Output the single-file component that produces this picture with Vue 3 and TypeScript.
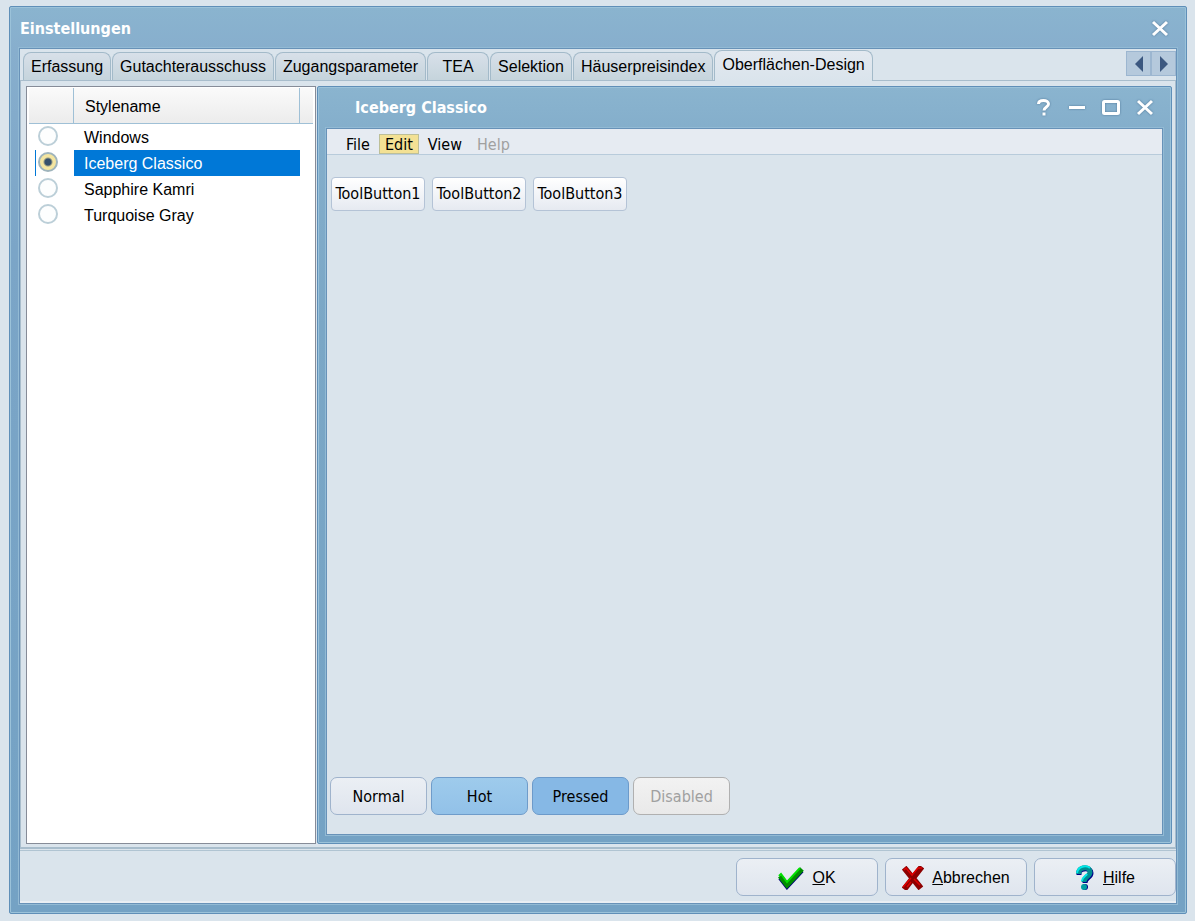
<script setup lang="ts">
import { ref } from 'vue'

const tabs = ['Erfassung', 'Gutachterausschuss', 'Zugangsparameter', 'TEA', 'Selektion', 'Häuserpreisindex', 'Oberflächen-Design']
const activeTab = ref('Oberflächen-Design')

const styles = ['Windows', 'Iceberg Classico', 'Sapphire Kamri', 'Turquoise Gray']
const selected = ref('Iceberg Classico')

const toolButtons = ['ToolButton1', 'ToolButton2', 'ToolButton3']
</script>

<template>
  <div class="desktop">
    <main class="window">
      <header class="caption">
        <h1>Einstellungen</h1>
        <button type="button" class="cap-btn" aria-label="Schließen">
          <svg width="18" height="18" viewBox="0 0 18 18"><path d="M2 2L16 15M16 2L2 15" /></svg>
        </button>
      </header>

      <div class="client">
        <div class="tab-strip">
          <div class="tabs" role="tablist">
            <button
              v-for="tab in tabs"
              :key="tab"
              type="button"
              role="tab"
              class="tab"
              :class="{ active: tab === activeTab }"
              :aria-selected="tab === activeTab"
              @click="activeTab = tab"
            >{{ tab }}</button>
          </div>
          <div class="scroller">
            <button type="button" aria-label="Zurück"><svg width="8" height="16" viewBox="0 0 8 16"><path d="M8 0V16L0 8Z" /></svg></button>
            <button type="button" aria-label="Weiter"><svg width="8" height="16" viewBox="0 0 8 16"><path d="M0 0V16L8 8Z" /></svg></button>
          </div>
        </div>

        <section class="page">
          <div class="list">
            <table>
              <colgroup><col class="c-radio" /><col class="c-name" /><col /></colgroup>
              <thead>
                <tr><th></th><th>Stylename</th><th></th></tr>
              </thead>
              <tbody>
                <tr v-for="(name, i) in styles" :key="name" :class="{ selected: name === selected }">
                  <td class="radio-cell">
                    <input :id="'style-' + i" v-model="selected" type="radio" name="style" :value="name" />
                  </td>
                  <td class="name-cell"><label :for="'style-' + i">{{ name }}</label></td>
                  <td></td>
                </tr>
              </tbody>
            </table>
          </div>

          <section class="preview">
            <header class="caption preview-caption">
              <h2>Iceberg Classico</h2>
              <div class="cap-btns">
                <button type="button" class="cap-btn" aria-label="Hilfe">
                  <svg width="18" height="18" viewBox="0 0 18 18"><path class="thin" d="M3.500 5C3.500 2.500 6 1.500 8.500 1.500C11.500 1.500 13.500 3 13.500 5C13.500 8 9 8 9 11.500M9 13.500V16.500" /></svg>
                </button>
                <button type="button" class="cap-btn" aria-label="Minimieren">
                  <svg width="18" height="18" viewBox="0 0 18 18"><path d="M1 8.500H17" /></svg>
                </button>
                <button type="button" class="cap-btn" aria-label="Maximieren">
                  <svg width="20" height="18" viewBox="0 0 20 18"><rect x="2.500" y="2.500" width="15" height="12" rx="1" /></svg>
                </button>
                <button type="button" class="cap-btn" aria-label="Schließen">
                  <svg width="18" height="18" viewBox="0 0 18 18"><path d="M2 2L16 15M16 2L2 15" /></svg>
                </button>
              </div>
            </header>
            <div class="preview-client">
              <nav class="menu">
                <button type="button">File</button>
                <button type="button" class="hot">Edit</button>
                <button type="button">View</button>
                <button type="button" disabled>Help</button>
              </nav>
              <div class="toolbar">
                <button v-for="label in toolButtons" :key="label" type="button">{{ label }}</button>
              </div>
              <div class="states">
                <button type="button" class="btn">Normal</button>
                <button type="button" class="btn hot">Hot</button>
                <button type="button" class="btn pressed">Pressed</button>
                <button type="button" class="btn" disabled>Disabled</button>
              </div>
            </div>
          </section>
        </section>

        <footer class="footer">
          <button type="button" class="btn">
            <svg width="26" height="24" viewBox="0 0 26 24">
              <path d="M2 10L9 19L24 3" transform="translate(0 2)" fill="none" stroke="#000078" stroke-width="4" />
              <path d="M2 10L9 19L24 3" fill="none" stroke="#008c00" stroke-width="5" />
              <path d="M1 10L3 8L9 16L22 2" fill="none" stroke="#00e000" stroke-width="2" />
            </svg>
            <span><u>O</u>K</span>
          </button>
          <button type="button" class="btn">
            <svg width="22" height="24" viewBox="0 0 22 24">
              <path d="M4 4L17 20M18 3L4 21" fill="none" stroke="#8c0000" stroke-width="6" stroke-linecap="square" stroke-linejoin="round" />
              <path d="M2 4L4 2L10 9L16 2H20M1 21L9 12M5 21L9 16M12 13L18 19" fill="none" stroke="#e00000" stroke-width="1.500" />
            </svg>
            <span><u>A</u>bbrechen</span>
          </button>
          <button type="button" class="btn">
            <svg width="20" height="26" viewBox="0 0 20 26">
              <path d="M4 10V7C6 3 16 2 16 8C16 13 10 12 10 18" fill="none" stroke="#000088" stroke-width="5" />
              <path d="M4 9V6C6 2 15 1 15 7C15 12 9 11 9 17" fill="none" stroke="#008c90" stroke-width="5" />
              <path d="M2 8C3 1 11 0 15 3M7 16C7 12 11 11 12 9" fill="none" stroke="#00e8e8" stroke-width="2" />
              <circle cx="10" cy="22" r="3" fill="#000088" /><circle cx="9" cy="22" r="3" fill="#009ca0" />
            </svg>
            <span><u>H</u>ilfe</span>
          </button>
        </footer>
      </div>
    </main>
  </div>
</template>

<style>
body {
  margin: 0;
  background: #dae4ec;
}
</style>

<style scoped>
* {
  box-sizing: border-box;
}

.desktop {
  display: flex;
  min-height: 100vh;
  padding: 6px 8px 7px 9px;
  background: #dae4ec;
  color: #000;
  font: 16px/20px "Liberation Sans", Arial, sans-serif;
}

button {
  margin: 0;
  padding: 0;
  border: 0;
  background: none;
  color: inherit;
  font: inherit;
}

.window {
  flex: 1;
  min-width: 0;
  display: flex;
  flex-direction: column;
  padding: 0 9px 9px;
  border: 1px solid #5f8fb8;
  border-radius: 2px;
  background: linear-gradient(#8ab4cf, #87aecd 44px, #7ba5c7 240px, #74a2c4);
  box-shadow: inset 0 0 0 1px #9bc2d9;
}

.caption {
  display: flex;
  align-items: center;
  justify-content: space-between;
  height: 41px;
  padding: 2px 8px 0 1px;
}

h1,
h2 {
  margin: 0;
  color: #fff;
  font: bold 16px/20px "DejaVu Sans Condensed", "DejaVu Sans", sans-serif;
}

.cap-btns {
  display: flex;
  gap: 15px;
}

.cap-btn {
  display: flex;
}

.cap-btn svg {
  fill: none;
  stroke: #fff;
  stroke-width: 3;
  filter: drop-shadow(0 0 1px #52799a);
}

.cap-btn .thin {
  stroke-width: 3;
}

.client {
  flex: 1;
  display: flex;
  flex-direction: column;
  border: 1px solid #6892b8;
  background: #dae4ec;
  box-shadow: 0 0 0 1px #92bad4;
}

.tab-strip {
  display: flex;
  align-items: flex-end;
  justify-content: space-between;
  height: 31px;
  padding-left: 3px;
}

.tabs {
  display: flex;
  align-items: flex-end;
  gap: 1px;
}

.tab {
  min-width: 62px;
  height: 28px;
  padding: 0 7px;
  border: 1px solid #a3bac9;
  border-bottom: 0;
  border-radius: 8px 8px 0 0;
  background: linear-gradient(#d8e0e9, #c5d4dc);
  white-space: nowrap;
}

.tab.active {
  position: relative;
  height: 31px;
  margin-bottom: -1px;
  padding-bottom: 3px;
  background: linear-gradient(#e3e9f0, #dae4ec);
}

.scroller {
  display: flex;
  align-self: flex-start;
  margin-top: 2px;
}

.scroller button {
  display: flex;
  align-items: center;
  justify-content: center;
  width: 25px;
  height: 25px;
  border: 1px solid #9cb6d0;
  background: #b5c9dc;
}

.scroller svg {
  fill: #3c5880;
}

.page {
  flex: 1;
  display: flex;
  gap: 1px;
  padding: 5px 3px 3px 5px;
  border: 1px solid #a8bdcc;
  border-bottom-width: 2px;
  background: #dae4ec;
}

.list {
  flex: 0 0 290px;
  padding: 1px 2px;
  border: 1px solid #868c98;
  background: #fff;
}

table {
  width: 100%;
  table-layout: fixed;
  border-collapse: separate;
  border-spacing: 0;
}

.c-radio {
  width: 45px;
}

.c-name {
  width: 226px;
}

th {
  height: 36px;
  padding: 2px 0 0 11px;
  border-right: 1px solid #9fc0d6;
  border-bottom: 1px solid #9fc0d6;
  background: linear-gradient(#fafafa, #ececec);
  font-weight: normal;
  text-align: left;
}

th:last-child {
  border-right: 0;
}

td {
  height: 26px;
  padding: 0;
}

.name-cell label {
  display: block;
  padding: 4px 0 2px 10px;
}

.selected .name-cell {
  background: #0078d7;
  color: #fff;
}

.radio-cell {
  padding: 0 0 3px 9px;
}

.radio-cell input {
  display: block;
  appearance: none;
  width: 20px;
  height: 20px;
  margin: 0;
  border: 2px solid #bccfd8;
  border-radius: 50%;
  background: #fdfefe;
}

.radio-cell input:checked {
  border-color: #9fb4bc;
  background: radial-gradient(circle, #36506c 3px, #f4e5a0 5px);
}

.selected .radio-cell {
  background: linear-gradient(#0078d7, #0078d7) 6px 0 / 1px 100% no-repeat;
}

.preview {
  flex: 1;
  min-width: 0;
  display: flex;
  flex-direction: column;
  padding: 0 8px 8px;
  border: 1px solid #5f8fb8;
  border-radius: 2px;
  background: linear-gradient(#8ab4cf, #84aecb 44px, #7ba7c6 240px, #74a2c4);
  box-shadow: inset 0 0 0 1px #9bc2d9;
}

.preview-caption {
  padding: 0 9px 0 29px;
}

.preview-client {
  flex: 1;
  display: flex;
  flex-direction: column;
  border: 1px solid #6892b8;
  background: #dae4ec;
  box-shadow: 0 0 0 1px #92bad4;
  font-family: "DejaVu Sans Condensed", "DejaVu Sans", sans-serif;
}

.menu {
  display: flex;
  align-items: flex-end;
  gap: 3px;
  height: 26px;
  padding-left: 13px;
  border-bottom: 1px solid #b8cbdb;
  background: #e6ebf2;
}

.menu button {
  height: 20px;
  padding: 2px 5px 0;
  border: 1px solid transparent;
  line-height: 16px;
}

.menu button.hot {
  border-color: #bdbf98;
  background: #f3e194;
}

button:disabled {
  color: #a0a0a0;
}

.toolbar {
  display: flex;
  gap: 7px;
  padding: 22px 4px 0;
}

.toolbar button {
  width: 94px;
  height: 34px;
  border: 1px solid #b4c3d6;
  border-radius: 4px;
  background: linear-gradient(#fff, #e6eaf1);
}

.states {
  display: flex;
  gap: 4px;
  margin-top: auto;
  padding: 0 3px 19px;
}

.btn {
  display: flex;
  align-items: center;
  justify-content: center;
  gap: 8px;
  height: 38px;
  padding-top: 1px;
  border: 1px solid #9fb3cc;
  border-radius: 7px;
  background: linear-gradient(#ebeff4, #dfe5ee);
}

.states .btn {
  width: 97px;
}

.states .hot {
  border-color: #6f9cca;
  background: linear-gradient(#9ecbec, #92c1e8);
}

.states .pressed {
  border-color: #6c9aca;
  background: #86b8e5;
}

.states .btn:disabled {
  border-color: #b0b0b0;
  background: linear-gradient(#f2f2f2, #e9e9e9);
}

.footer {
  display: flex;
  justify-content: flex-end;
  gap: 7px;
  margin-top: 1px;
  padding: 7px 0 5px;
  border-top: 1px solid #b0c4d2;
  border-bottom: 2px solid #e9eef3;
}

.footer .btn {
  width: 142px;
}
</style>
